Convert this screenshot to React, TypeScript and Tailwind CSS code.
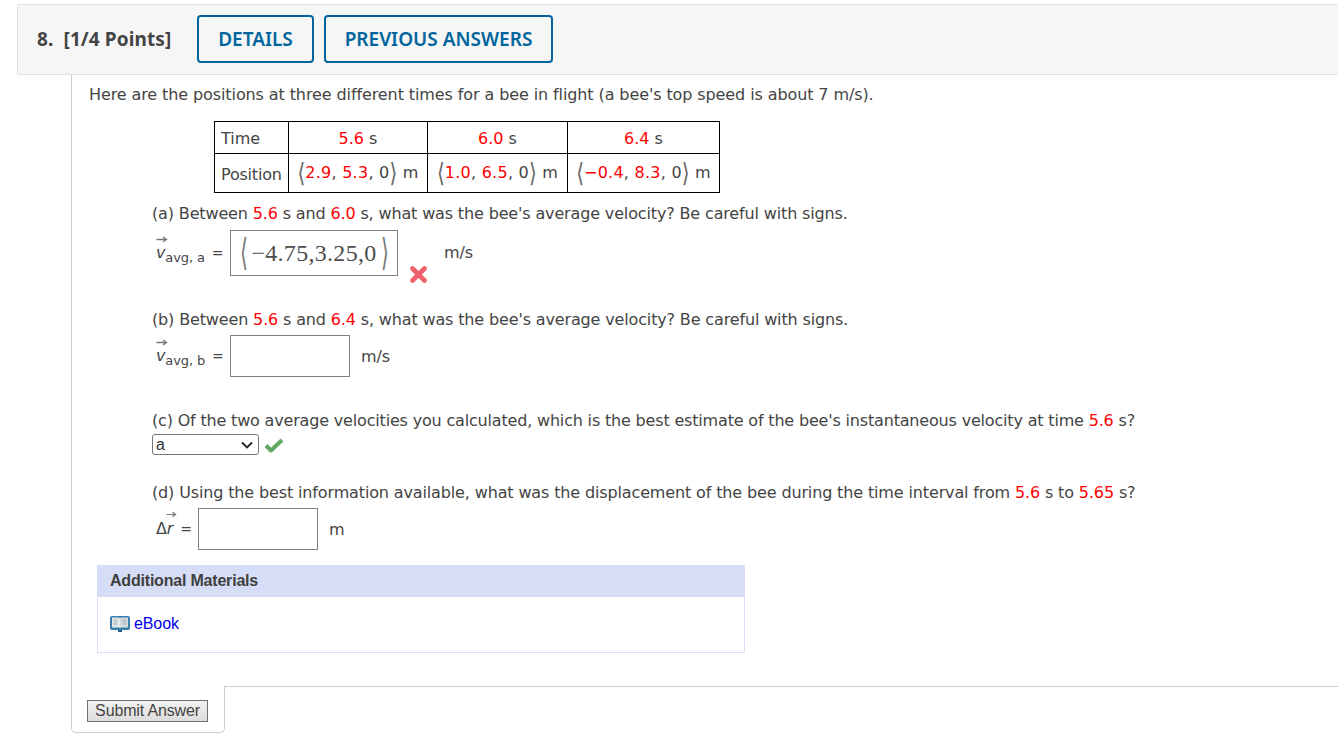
const font = { fontFamily: '"DejaVu Sans", Verdana, sans-serif' };

function R({ children }: { children: React.ReactNode }) {
  return <span className="text-[#ff0000]">{children}</span>;
}

function Ang({ right }: { right?: boolean }) {
  return (
    <span className="inline-block scale-y-[1.3] align-[-2px] text-[20px] leading-[20px] tracking-normal text-[#666] [font-family:'DejaVu_Sans',sans-serif]">
      {right ? "⟩" : "⟨"}
    </span>
  );
}

function Vec({ sub }: { sub: string }) {
  return (
    <span className="relative inline-flex items-baseline ml-[4px] w-[74px] whitespace-nowrap">
      <svg className="absolute left-0 -top-[4px]" width="12" height="7" viewBox="0 0 12 7">
        <path d="M0.5 3.5H10M7 1l3.5 2.5L7 6" fill="none" stroke="#777" strokeWidth="1.3" />
      </svg>
      <i className="text-[16px]">v</i>
      <span className="text-[13px] relative top-[4px]">avg, {sub}</span>
      <span className="ml-[7px] text-[14px]">=</span>
    </span>
  );
}

export default function App() {
  return (
    <div className="bg-white h-[742px] w-[1338px] overflow-hidden pt-[4px] text-[#444] text-[16px]" style={font}>
      <div className="ml-[17px] h-[71px] bg-[#f6f6f6] border border-r-0 border-[#e2e2e2] rounded-l-[2px] flex items-center pb-[2px] pl-[19px] [font-family:'Noto_Sans',sans-serif]">
        <span className="font-bold text-[19px] pt-[2px] text-[#444] whitespace-pre w-[160px] tracking-[0.1px]">8.  [1/4 Points]</span>
        <span className="h-[48px] w-[117px] border-2 border-[#00659c] rounded-[4px] flex items-center justify-center pt-[2px] text-[19px] font-semibold text-[#00659c]">
          DETAILS
        </span>
        <span className="ml-[10px] h-[48px] w-[229px] border-2 border-[#00659c] rounded-[4px] flex items-center justify-center pt-[2px] text-[19px] font-semibold text-[#00659c]">
          PREVIOUS ANSWERS
        </span>
      </div>

      <div className="ml-[71px] border-l border-[#cccccc] pl-[17px] pt-[7px] pb-[33px] leading-[26px] tracking-[-0.12px]">
        <p className="h-[24px] tracking-[-0.1px]">Here are the positions at three different times for a bee in flight (a bee's top speed is about 7 m/s).</p>

        <table className="mt-[15px] ml-[125px] border-collapse border border-black text-[16px] leading-[20px] tracking-normal table-fixed w-[506px]">
          <colgroup>
            <col className="w-[74px]" />
            <col className="w-[139px]" />
            <col className="w-[140px]" />
            <col className="w-[152px]" />
          </colgroup>
          <tbody>
            <tr className="h-[32px] text-center">
              <td className="border border-black text-left pl-[6px] pt-[2px]">Time</td>
              <td className="border border-black pt-[2px]"><R>5.6</R> s</td>
              <td className="border border-black pt-[2px]"><R>6.0</R> s</td>
              <td className="border border-black pt-[2px]"><R>6.4</R> s</td>
            </tr>
            <tr className="h-[39px] text-center">
              <td className="border border-black text-left pl-[6px] pt-[3px] tracking-[-0.2px]">Position</td>
              <td className="border border-black whitespace-nowrap tracking-[0.25px]"><Ang /><R>2.9</R>, <R>5.3</R>, 0<Ang right /> m</td>
              <td className="border border-black whitespace-nowrap tracking-[0.25px]"><Ang /><R>1.0</R>, <R>6.5</R>, 0<Ang right /> m</td>
              <td className="border border-black whitespace-nowrap tracking-[0.25px]"><Ang /><R>−0.4</R>, <R>8.3</R>, 0<Ang right /> m</td>
            </tr>
          </tbody>
        </table>

        <div className="ml-[63px]">
          <p className="mt-[8px] h-[24px] tracking-[-0.145px]">(a) Between <R>5.6</R> s and <R>6.0</R> s, what was the bee's average velocity? Be careful with signs.</p>
          <div className="mt-[5px] flex items-center h-[46px]">
            <Vec sub="a" />
            <div className="w-[168px] h-[46px] border border-[#808080] flex items-center justify-center text-[24px] text-[#4d4d4d] tracking-[0.3px] whitespace-nowrap [font-family:'Liberation_Serif',serif]">
              <span className="inline-block mr-[3px] scale-y-[1.55] scale-x-[0.85] text-[#777]">⟨</span>−4.75,3.25,0<span className="inline-block ml-[3px] scale-y-[1.55] scale-x-[0.85] text-[#777]">⟩</span>
            </div>
            <svg className="ml-[12px] self-end -mb-[7px]" width="17" height="17" viewBox="0 0 17 17">
              <path d="M2.5 2.5L14.5 14.5M14.5 2.5L2.5 14.5" stroke="#f0606a" strokeWidth="4.6" strokeLinecap="round" />
            </svg>
            <span className="ml-[17px]">m/s</span>
          </div>

          <p className="mt-[31px] h-[24px] tracking-[-0.145px]">(b) Between <R>5.6</R> s and <R>6.4</R> s, what was the bee's average velocity? Be careful with signs.</p>
          <div className="mt-[4px] flex items-center h-[42px]">
            <Vec sub="b" />
            <div className="w-[120px] h-[42px] border border-[#808080]" />
            <span className="ml-[11px] mt-[2px]">m/s</span>
          </div>

          <p className="mt-[31px] h-[24px] tracking-[-0.176px]">(c) Of the two average velocities you calculated, which is the best estimate of the bee's instantaneous velocity at time <R>5.6</R> s?</p>
          <div className="mt-[2px] flex items-center h-[21px]">
            <div className="relative w-[107px] h-[21px]">
              <select className="appearance-none block w-full h-full pl-[3px] border border-[#767676] rounded-[3px] bg-white text-[16px] leading-[18px] text-[#333] [font-family:'Liberation_Sans',sans-serif]">
                <option>a</option>
              </select>
              <svg className="absolute right-[6px] top-[7px]" width="12" height="8" viewBox="0 0 12 8">
                <path d="M1 1.5l5 5 5-5" fill="none" stroke="#222" strokeWidth="1.8" />
              </svg>
            </div>
            <svg className="ml-[5px]" width="20" height="16" viewBox="0 0 20 16">
              <path d="M2 8.5l5 5L18 3" fill="none" stroke="#62a861" strokeWidth="4" strokeLinejoin="round" />
            </svg>
          </div>

          <p className="mt-[25px] h-[24px] tracking-[-0.137px]">(d) Using the best information available, what was the displacement of the bee during the time interval from <R>5.6</R> s to <R>5.65</R> s?</p>
          <div className="mt-[4px] flex items-center h-[42px]">
            <span className="relative ml-[4px] w-[42px] whitespace-nowrap">
              <svg className="absolute left-[10px] -top-[5px]" width="11" height="7" viewBox="0 0 12 7">
                <path d="M0.5 3.5H10M7 1l3.5 2.5L7 6" fill="none" stroke="#777" strokeWidth="1.3" />
              </svg>
              Δ<i>r</i><span className="ml-[7px] text-[14px]">=</span>
            </span>
            <div className="w-[120px] h-[42px] border border-[#808080]" />
            <span className="ml-[11px] mt-[2px]">m</span>
          </div>
        </div>

        <div className="mt-[15px] ml-[8px] w-[648px] tracking-normal [font-family:'Liberation_Sans',sans-serif]">
          <div className="h-[32px] bg-[#d6ddf6] pl-[13px] flex items-center font-bold text-[#404040] tracking-[-0.2px]">Additional Materials</div>
          <div className="h-[56px] border border-t-0 border-[#d6e0f5] pl-[12px] pb-[2px] flex items-center">
            <svg width="20" height="17" viewBox="0 0 20 17">
              <rect x="0" y="1" width="20" height="14" rx="2" fill="#3d7fac" />
              <path d="M8 15h4v2H8z" fill="#2a5f85" />
              <path d="M2 2.5h7l1 1V13l-1-.6H2z" fill="#e4e9ec" />
              <path d="M18 2.5h-7l-1 1V13l1-.6h7z" fill="#d5dcdf" />
              <path d="M3.5 5h4M3.5 7h4M3.5 9h4M12.5 5h4M12.5 7h4M12.5 9h4" stroke="#a3aeb5" strokeWidth="1" />
            </svg>
            <span className="ml-[4px] text-[#0000ee] tracking-[-0.1px]">eBook</span>
          </div>
        </div>
      </div>

      <div className="ml-[71px] flex items-start">
        <div className="w-[154px] h-[47px] border border-t-0 border-[#cccccc] rounded-b-[5px] pl-[15px] pt-[14px]">
          <button className="block w-[121px] h-[22px] border border-[#707070] bg-gradient-to-b from-[#f2f2f2] to-[#dcdcdc] text-[16px] leading-[18px] tracking-[-0.15px] text-[#444] [font-family:'Liberation_Sans',sans-serif]">
            Submit Answer
          </button>
        </div>
        <div className="flex-1 border-t border-[#cccccc]" />
      </div>
    </div>
  );
}
